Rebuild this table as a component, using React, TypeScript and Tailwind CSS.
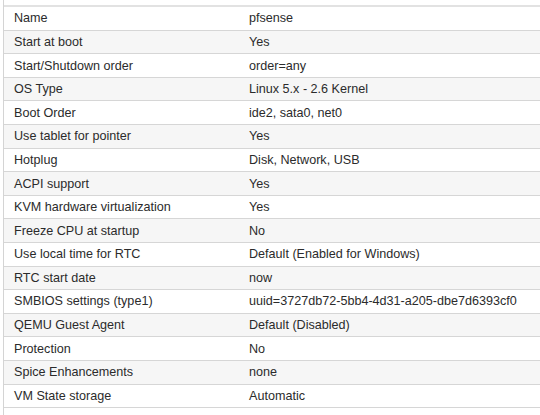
import React from "react";

const rows: [string, string][] = [
  ["Name", "pfsense"],
  ["Start at boot", "Yes"],
  ["Start/Shutdown order", "order=any"],
  ["OS Type", "Linux 5.x - 2.6 Kernel"],
  ["Boot Order", "ide2, sata0, net0"],
  ["Use tablet for pointer", "Yes"],
  ["Hotplug", "Disk, Network, USB"],
  ["ACPI support", "Yes"],
  ["KVM hardware virtualization", "Yes"],
  ["Freeze CPU at startup", "No"],
  ["Use local time for RTC", "Default (Enabled for Windows)"],
  ["RTC start date", "now"],
  ["SMBIOS settings (type1)", "uuid=3727db72-5bb4-4d31-a205-dbe7d6393cf0"],
  ["QEMU Guest Agent", "Default (Disabled)"],
  ["Protection", "No"],
  ["Spice Enhancements", "none"],
  ["VM State storage", "Automatic"],
];

export default function App() {
  return (
    <div
      className="w-[540px] h-[415px] overflow-hidden bg-white text-[12.6px] text-[#2b2b2b]"
      style={{ fontFamily: '"Liberation Sans", Arial, sans-serif' }}
    >
      <div className="ml-[3px] border-l border-[#d4d4d4] h-full">
        <div className="h-[5px] bg-white" />
        <div className="h-[2px] bg-[#e2e2e2]" />
        {rows.map(([k, v], i) => (
          <div
            key={k}
            className={`flex items-center pt-[1px] h-[23.6px] border-b border-[#d6d6d6] ${
              i % 2 === 1 ? "bg-[#f6f6f6]" : "bg-white"
            }`}
          >
            <div className="w-[245px] pl-[10px] whitespace-nowrap">{k}</div>
            <div className="whitespace-nowrap">{v}</div>
          </div>
        ))}
      </div>
    </div>
  );
}
